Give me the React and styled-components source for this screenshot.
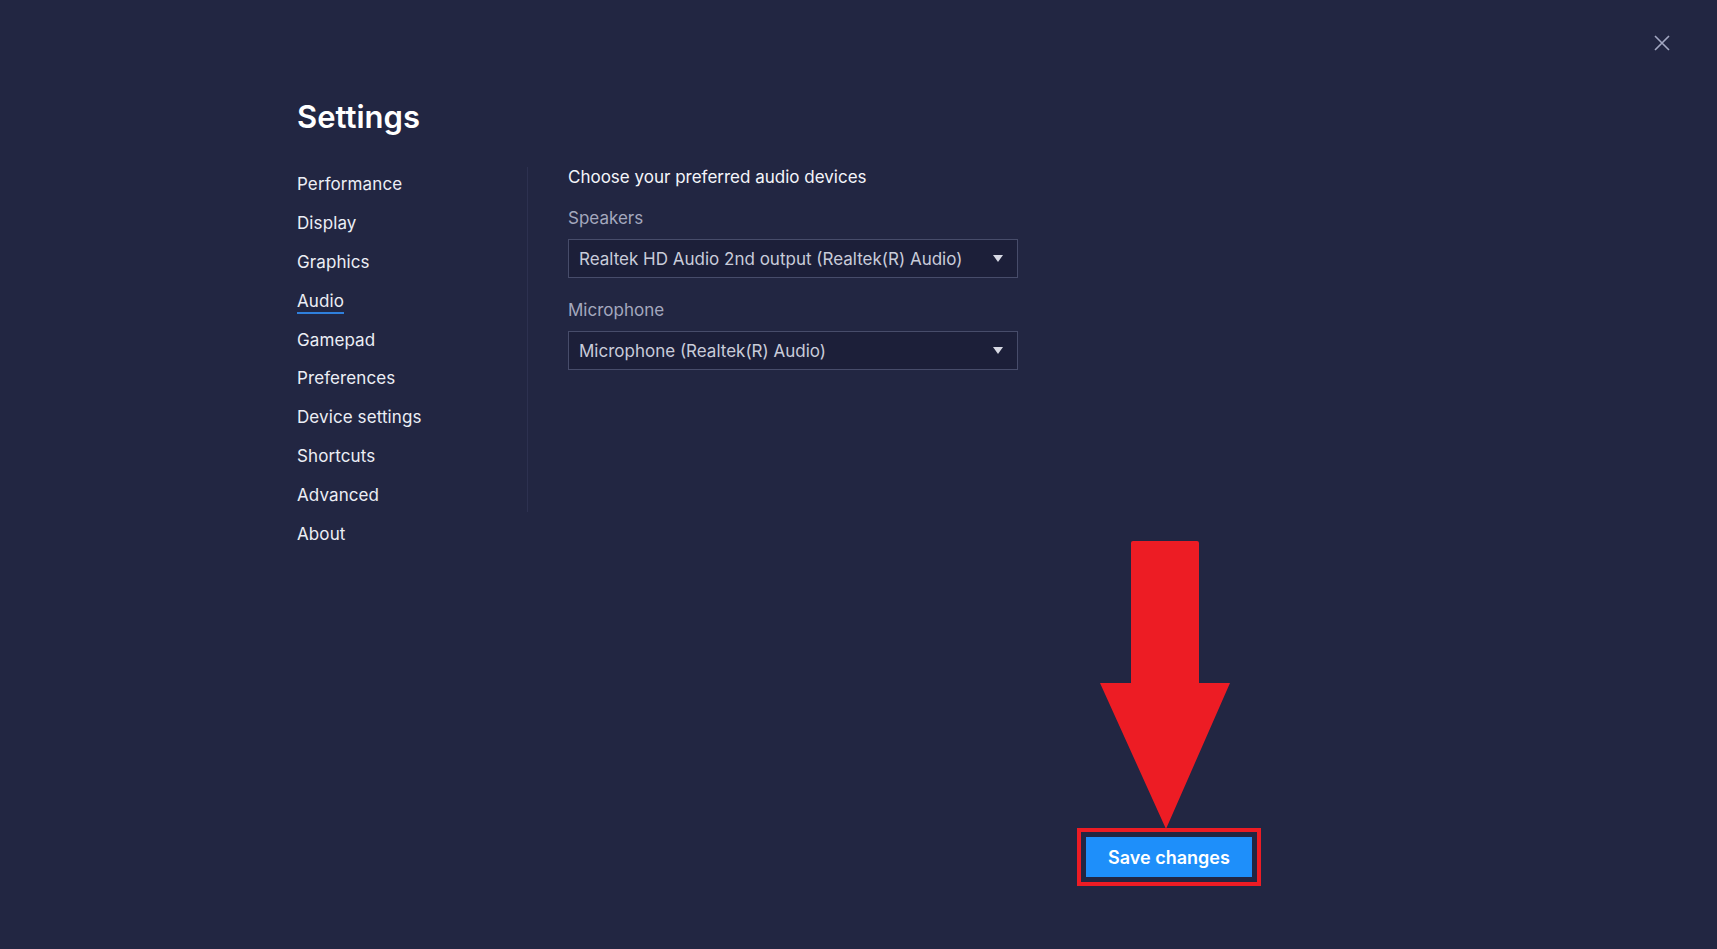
import React from "react";
import styled, { createGlobalStyle } from "styled-components";

const GlobalStyle = createGlobalStyle`
  html, body {
    margin: 0;
    padding: 0;
    background: #222642;
  }
  * {
    box-sizing: border-box;
  }
`;

const Page = styled.div`
  width: 100%;
  min-height: 100vh;
  background: #222642;
  font-family: Inter, "Noto Sans", sans-serif;
  color: #eceef5;
  display: flex;
  flex-direction: column;
`;

const TopBar = styled.div`
  display: flex;
  justify-content: flex-end;
  padding: 35px 47px 0 0;
`;

const CloseButton = styled.button`
  width: 16px;
  height: 16px;
  padding: 0;
  border: none;
  background: none;
  display: flex;
  cursor: pointer;
`;

const Main = styled.div`
  padding-left: 297px;
`;

const Title = styled.h1`
  margin: 48px 0 0;
  font-size: 31px;
  line-height: 36px;
  font-weight: 600;
  color: #ffffff;
`;

const Body = styled.div`
  display: grid;
  grid-template-columns: 230px 1px 1fr;
  margin-top: 31px;
`;

const Nav = styled.ul`
  list-style: none;
  margin: 0;
  padding: 0;
`;

const NavRow = styled.li`
  height: 38.8px;
  display: flex;
  align-items: center;
`;

const NavLink = styled.span`
  font-size: 17px;
  line-height: 22px;
  color: #eceef5;
  letter-spacing: 0.1px;
  border-bottom: 2px solid ${(p) => (p.$active ? "#2f7fdc" : "transparent")};
  cursor: pointer;
`;

const Divider = styled.div`
  width: 1px;
  height: 345px;
  margin-top: 1px;
  background: #2d3150;
`;

const Content = styled.div`
  padding-left: 40px;
  width: 490px;
`;

const Heading = styled.div`
  font-size: 17px;
  line-height: 22px;
  color: #f4f5fa;
`;

const Field = styled.div`
  margin-top: ${(p) => p.$gap}px;
`;

const Label = styled.div`
  font-size: 17px;
  line-height: 22px;
  color: #a4a8be;
  margin-bottom: 10px;
`;

const Select = styled.div`
  width: 450px;
  height: 39px;
  border: 1px solid #474c6a;
  background: #1c1f39;
  display: flex;
  align-items: center;
  justify-content: space-between;
  padding: 0 14px 0 10px;
  font-size: 17px;
  color: #c9ccda;
`;

const Caret = styled.span`
  width: 0;
  height: 0;
  border-left: 5.5px solid transparent;
  border-right: 5.5px solid transparent;
  border-top: 7px solid #d7d9e4;
`;

const Footer = styled.div`
  margin-top: auto;
  padding: 0 0 63px 1077px;
  display: flex;
`;

const Highlight = styled.div`
  position: relative;
  border: 4px solid #ed1c24;
  padding: 5px 5px;
  background: #222642;
`;

const SaveButton = styled.button`
  width: 166px;
  height: 40px;
  border: none;
  background: #1e8ffa;
  color: #ffffff;
  font-family: Inter, "Noto Sans", sans-serif;
  font-size: 18px;
  font-weight: 600;
  cursor: pointer;
  display: block;
`;

const ArrowMark = styled.svg`
  position: absolute;
  left: 19px;
  bottom: calc(100% + 3px);
  width: 130px;
  height: 288px;
`;

const navItems = [
  "Performance",
  "Display",
  "Graphics",
  "Audio",
  "Gamepad",
  "Preferences",
  "Device settings",
  "Shortcuts",
  "Advanced",
  "About",
];

function App() {
  return (
    <Page>
      <GlobalStyle />
      <TopBar>
        <CloseButton aria-label="Close">
          <svg width="16" height="16" viewBox="0 0 16 16">
            <path
              d="M1 1 L15 15 M15 1 L1 15"
              stroke="#a3a7c2"
              strokeWidth="1.6"
              fill="none"
            />
          </svg>
        </CloseButton>
      </TopBar>
      <Main>
        <Title>Settings</Title>
        <Body>
          <Nav>
            {navItems.map((item) => (
              <NavRow key={item}>
                <NavLink $active={item === "Audio"}>{item}</NavLink>
              </NavRow>
            ))}
          </Nav>
          <Divider />
          <Content>
            <Heading>Choose your preferred audio devices</Heading>
            <Field $gap={19}>
              <Label>Speakers</Label>
              <Select>
                Realtek HD Audio 2nd output (Realtek(R) Audio)
                <Caret />
              </Select>
            </Field>
            <Field $gap={21}>
              <Label>Microphone</Label>
              <Select>
                Microphone (Realtek(R) Audio)
                <Caret />
              </Select>
            </Field>
          </Content>
        </Body>
      </Main>
      <Footer>
        <Highlight>
          <ArrowMark viewBox="0 0 130 288">
            <path
              d="M33 0 H97 Q99 0 99 2 V142 H130 L66 288 L0 142 H31 V2 Q31 0 33 0 Z"
              fill="#ed1c24"
            />
          </ArrowMark>
          <SaveButton>Save changes</SaveButton>
        </Highlight>
      </Footer>
    </Page>
  );
}

export default App;
